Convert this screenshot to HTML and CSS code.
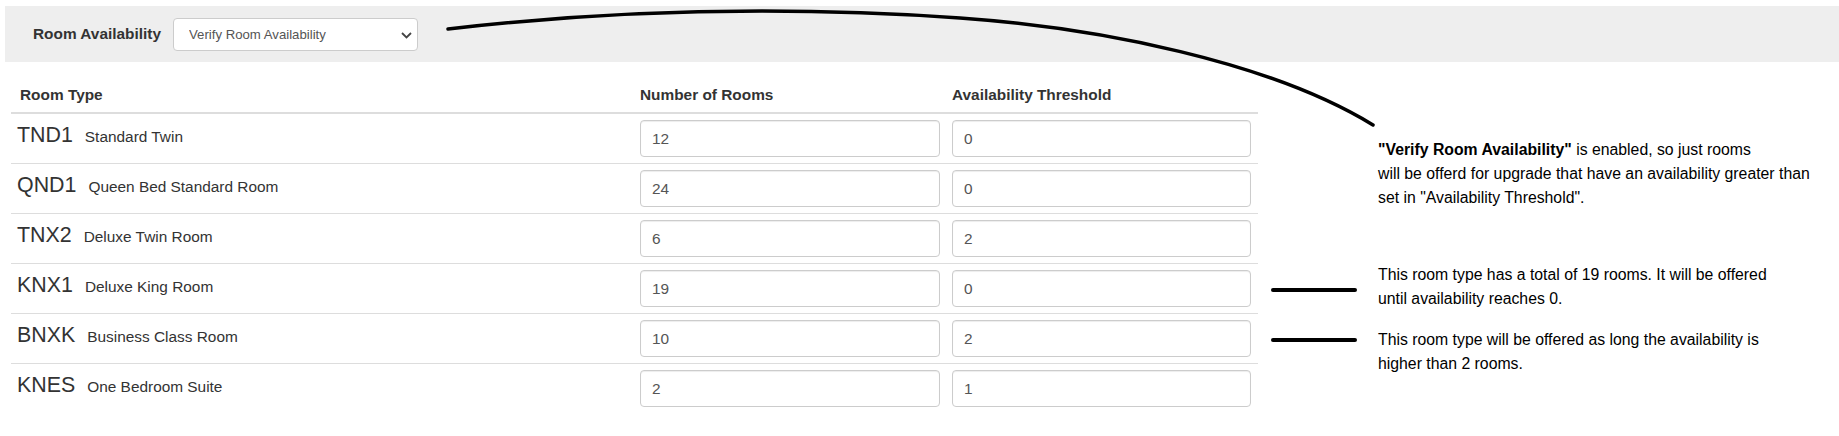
FILE: index.html
```html
<!DOCTYPE html>
<html lang="en">
<head>
    <meta charset="UTF-8">
    <meta name="viewport" content="width=device-width, initial-scale=1.0">
    <title>Room Availability</title>
    <link rel="stylesheet" href="styles.css">
</head>
<body>

<div class="page">

    <!-- hand drawn callout from the select to the note -->
    <svg class="callout" width="1839" height="436" viewBox="0 0 1839 436">
        <path d="M448 29 Q700 0 960 18 C1100 28 1270 62 1373 125" fill="none" stroke="#000" stroke-width="3.5" stroke-linecap="round"/>
    </svg>

    <div class="toolbar">
        <label for="availability">Room Availability</label>
        <div class="select-wrap">
            <select id="availability">
                <option>Verify Room Availability</option>
                <option>Ignore Room Availability</option>
            </select>
            <svg class="chevron" width="11" height="7" viewBox="0 0 11 7">
                <polyline points="1,1 5.5,5.5 10,1" fill="none" stroke="#444" stroke-width="1.8"/>
            </svg>
        </div>
    </div>

    <div class="content">
        <div class="rooms">
            <div class="row head">
                <div>Room Type</div>
                <div>Number of Rooms</div>
                <div>Availability Threshold</div>
            </div>
            <div class="row">
                <div class="room"><span class="code">TND1</span><span class="name">Standard Twin</span></div>
                <input type="text" value="12">
                <input type="text" value="0">
            </div>
            <div class="row">
                <div class="room"><span class="code">QND1</span><span class="name">Queen Bed Standard Room</span></div>
                <input type="text" value="24">
                <input type="text" value="0">
            </div>
            <div class="row">
                <div class="room"><span class="code">TNX2</span><span class="name">Deluxe Twin Room</span></div>
                <input type="text" value="6">
                <input type="text" value="2">
            </div>
            <div class="row">
                <div class="room"><span class="code">KNX1</span><span class="name">Deluxe King Room</span></div>
                <input type="text" value="19">
                <input type="text" value="0">
            </div>
            <div class="row">
                <div class="room"><span class="code">BNXK</span><span class="name">Business Class Room</span></div>
                <input type="text" value="10">
                <input type="text" value="2">
            </div>
            <div class="row">
                <div class="room"><span class="code">KNES</span><span class="name">One Bedroom Suite</span></div>
                <input type="text" value="2">
                <input type="text" value="1">
            </div>
        </div>

        <div class="notes">
            <p class="note note-lead">
                <strong>"Verify Room Availability"</strong> is enabled, so just rooms<br>
                will be offerd for upgrade that have an availability greater than<br>
                set in "Availability Threshold".
            </p>
            <div class="note note-total">
                <span class="marker"></span>
                <p>This room type has a total of 19 rooms. It will be offered<br>until availability reaches 0.</p>
            </div>
            <div class="note note-limit">
                <span class="marker"></span>
                <p>This room type will be offered as long the availability is<br>higher than 2 rooms.</p>
            </div>
        </div>
    </div>

</div>

</body>
</html>
```

FILE: styles.css
```css
body {
    margin: 0;
    font-family: "Liberation Sans", Arial, sans-serif;
    font-size: 15.4px;
    color: #333;
    background-color: #fff;
}
.page {
    position: relative;
    height: 436px;
    padding: 6px 0 0 5px;
    box-sizing: border-box;
    overflow: hidden;
}
.callout {
    position: absolute;
    left: 0;
    top: 0;
    pointer-events: none;
}
.toolbar {
    display: flex;
    align-items: center;
    gap: 12px;
    height: 56px;
    padding-left: 28px;
    background-color: #eee;
}
.toolbar label {
    font-weight: bold;
}
.select-wrap {
    position: relative;
}
.select-wrap select {
    appearance: none;
    -webkit-appearance: none;
    display: block;
    width: 245px;
    height: 33px;
    padding: 0 30px 0 15px;
    border: 1px solid #ccc;
    border-radius: 4px;
    background-color: #fff;
    font-family: "Liberation Sans", Arial, sans-serif;
    font-size: 13.2px;
    color: #555;
}
.chevron {
    position: absolute;
    right: 6px;
    top: 14px;
    pointer-events: none;
}
.content {
    display: flex;
    align-items: flex-start;
}
.rooms {
    width: 1247px;
    margin-left: 6px;
}
.row {
    display: grid;
    grid-template-columns: 1fr 300px 299px;
    column-gap: 12px;
    align-items: center;
    height: 49px;
    padding: 0 7px 0 9px;
    border-bottom: 1px solid #ddd;
}
.row:last-child {
    border-bottom: none;
}
.row.head {
    height: auto;
    padding-top: 23px;
    padding-bottom: 7px;
    line-height: 20px;
    font-weight: bold;
    border-bottom: 2px solid #ddd;
}
.room {
    margin-left: -3px;
    font-size: 21.4px;
    line-height: 43px;
    padding-bottom: 6px;
    white-space: nowrap;
}
.room .name {
    margin-left: 12px;
    font-size: 15.4px;
    line-height: 1;
}
.row input {
    width: 100%;
    height: 37px;
    box-sizing: border-box;
    padding: 0 11px;
    border: 1px solid #ccc;
    border-radius: 4px;
    box-shadow: inset 0 1px 1px rgba(0, 0, 0, 0.075);
    font-family: "Liberation Sans", Arial, sans-serif;
    font-size: 15.4px;
    color: #555;
}
.notes {
    margin-left: 13px;
    font-size: 15.8px;
    line-height: 24px;
    color: #000;
    white-space: nowrap;
}
.note {
    margin: 0;
}
.note p {
    margin: 0;
}
.note-lead {
    margin-top: 76px;
    padding-left: 107px;
}
.note-total,
.note-limit {
    display: flex;
    align-items: flex-start;
    gap: 21px;
}
.note-total {
    margin-top: 53px;
}
.note-limit {
    margin-top: 17px;
}
.marker {
    flex: none;
    width: 86px;
    height: 4px;
    border-radius: 2px;
    background-color: #000;
}
.note-total .marker {
    margin-top: 25px;
}
.note-limit .marker {
    margin-top: 10px;
}
```
